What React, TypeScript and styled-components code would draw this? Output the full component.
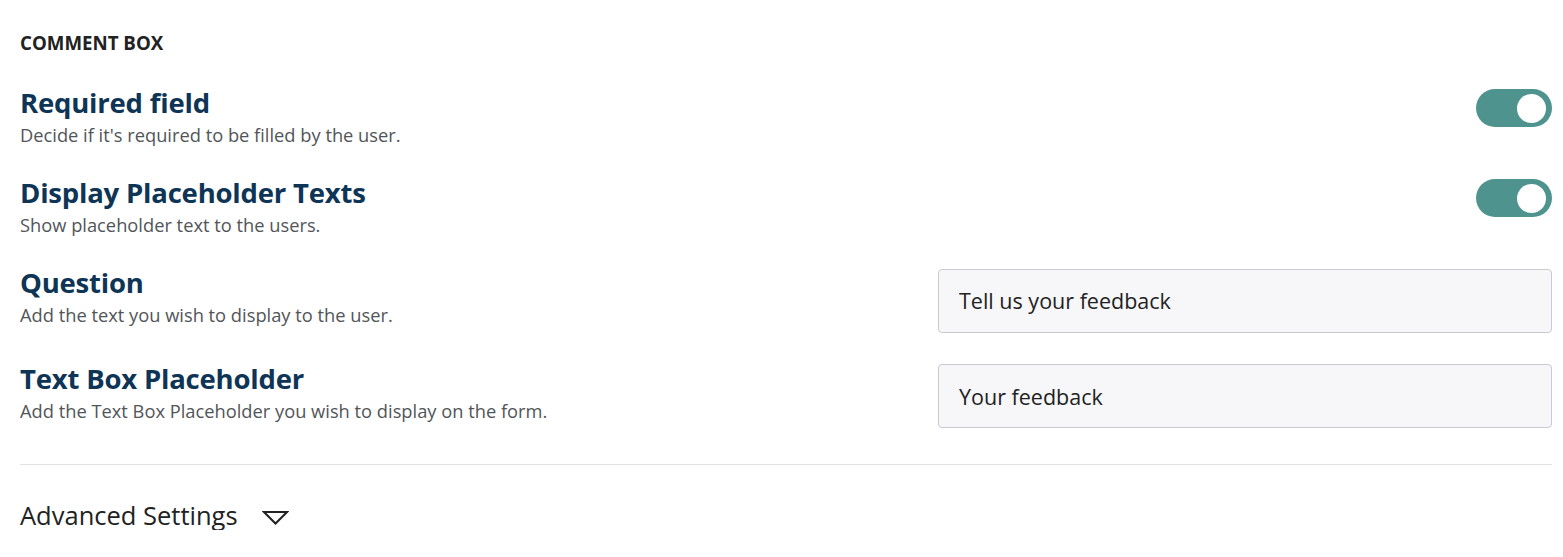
import * as React from 'react'
import styled, { createGlobalStyle } from 'styled-components'

const FONT = `"Open Sans", Lato, "Noto Sans", sans-serif`

const GlobalStyle = createGlobalStyle`
  html, body {
    margin: 0;
    padding: 0;
    background: #ffffff;
  }
  body {
    font-family: ${FONT};
  }
`

const Page = styled.div`
  padding: 32px 11px 0 20px;
`

const SectionLabel = styled.h4`
  margin: 0 0 33px 0;
  font-size: 18.7px;
  line-height: 22px;
  font-weight: 700;
  color: #222222;
`

const Row = styled.div`
  display: flex;
  justify-content: space-between;
  align-items: flex-start;
  margin-bottom: 30px;
`

const TextBlock = styled.div`
  display: flex;
  flex-direction: column;
`

const Title = styled.h3`
  margin: 0;
  font-size: 27.5px;
  line-height: 32px;
  font-weight: 700;
  color: #0e3456;
  letter-spacing: -0.2px;
`

const Subtitle = styled.p`
  margin: 3px 0 0 0;
  font-size: 18.3px;
  line-height: 25px;
  color: #525558;
`

const Switch = styled.button<{ $on: boolean }>`
  position: relative;
  flex: none;
  width: 76px;
  height: 38px;
  margin-top: 2px;
  border: none;
  border-radius: 19px;
  padding: 0;
  background: ${props => (props.$on ? '#4f938f' : '#c7c9ce')};
  cursor: pointer;

  &::after {
    content: '';
    position: absolute;
    top: 4.5px;
    left: ${props => (props.$on ? '41px' : '6px')};
    width: 29px;
    height: 29px;
    border-radius: 50%;
    background: #ffffff;
  }
`

const TextInput = styled.input`
  box-sizing: border-box;
  flex: none;
  width: 614px;
  height: 64px;
  margin-top: 1.5px;
  padding: 0 20px;
  border: 1px solid #c9cad1;
  border-radius: 4px;
  background: #f7f7f9;
  font-family: ${FONT};
  font-size: 21.5px;
  font-weight: 500;
  color: #222222;
  outline: none;
`

const Divider = styled.hr`
  margin: 36px 0 0 0;
  border: none;
  border-top: 1px solid #e2e2e4;
`

const Advanced = styled.button`
  display: flex;
  align-items: center;
  gap: 24px;
  margin-top: 35px;
  padding: 0;
  border: none;
  background: none;
  font-family: ${FONT};
  font-size: 25.5px;
  line-height: 30px;
  color: #222222;
  cursor: pointer;

  svg {
    margin-top: 6px;
  }
`

const Caret = () => (
  <svg width="27" height="15" viewBox="0 0 27 15" fill="none">
    <path d="M2 1 H25 L13.5 12.5 Z" stroke="#222" strokeWidth="2" strokeLinejoin="miter" />
  </svg>
)

interface SettingRowProps {
  title: string
  description: string
  children: React.ReactNode
}

const SettingRow: React.FC<SettingRowProps> = ({ title, description, children }) => (
  <Row>
    <TextBlock>
      <Title>{title}</Title>
      <Subtitle>{description}</Subtitle>
    </TextBlock>
    {children}
  </Row>
)

const App: React.FC = () => {
  const [required, setRequired] = React.useState(true)
  const [placeholders, setPlaceholders] = React.useState(true)
  const [question, setQuestion] = React.useState('Tell us your feedback')
  const [boxText, setBoxText] = React.useState('Your feedback')

  return (
    <>
      <GlobalStyle />
      <Page>
        <SectionLabel>COMMENT BOX</SectionLabel>
        <SettingRow title="Required field" description="Decide if it's required to be filled by the user.">
          <Switch $on={required} onClick={() => setRequired(!required)} aria-label="Required field" />
        </SettingRow>
        <SettingRow title="Display Placeholder Texts" description="Show placeholder text to the users.">
          <Switch $on={placeholders} onClick={() => setPlaceholders(!placeholders)} aria-label="Display placeholder texts" />
        </SettingRow>
        <SettingRow title="Question" description="Add the text you wish to display to the user.">
          <TextInput value={question} onChange={e => setQuestion(e.target.value)} />
        </SettingRow>
        <SettingRow title="Text Box Placeholder" description="Add the Text Box Placeholder you wish to display on the form.">
          <TextInput value={boxText} onChange={e => setBoxText(e.target.value)} />
        </SettingRow>
        <Divider />
        <Advanced>
          Advanced Settings
          <Caret />
        </Advanced>
      </Page>
    </>
  )
}

export default App
